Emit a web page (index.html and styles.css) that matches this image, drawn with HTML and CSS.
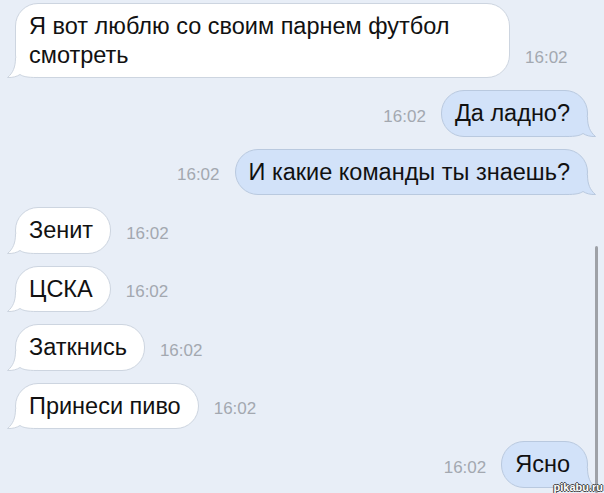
FILE: index.html
```html
<!DOCTYPE html>
<html lang="ru">
<head>
    <meta charset="UTF-8">
    <meta name="viewport" content="width=device-width, initial-scale=1.0">
    <title>Сообщения</title>
    <link rel="stylesheet" href="styles.css">
</head>
<body>
    <div class="chat">
        <!-- Входящее -->
        <div class="row in">
            <div class="bubble"><span class="text">Я вот люблю со своим парнем футбол смотреть</span>
                <svg class="tail" viewBox="0 0 30 20" width="30" height="20"><path class="tail-fill" d="M8.5 0 C8.5 9 6 15 0.5 19.5 C5.5 19.8 10 18.5 13 16.5 C16 18.5 20 19.5 30 19.5 L30 0 Z"/><path class="tail-line" d="M8.5 0 C8.5 9 6 15 0.5 19.5 C5.5 19.8 10 18.5 13 16.5 C16 18.5 20 19.5 30 19.5"/></svg>
            </div>
            <span class="time">16:02</span>
        </div>

        <!-- Исходящие -->
        <div class="row out">
            <span class="time">16:02</span>
            <div class="bubble"><span class="text">Да ладно?</span>
                <svg class="tail" viewBox="0 0 30 20" width="30" height="20"><path class="tail-fill" d="M8.5 0 C8.5 9 6 15 0.5 19.5 C5.5 19.8 10 18.5 13 16.5 C16 18.5 20 19.5 30 19.5 L30 0 Z"/><path class="tail-line" d="M8.5 0 C8.5 9 6 15 0.5 19.5 C5.5 19.8 10 18.5 13 16.5 C16 18.5 20 19.5 30 19.5"/></svg>
            </div>
        </div>
        <div class="row out">
            <span class="time">16:02</span>
            <div class="bubble"><span class="text">И какие команды ты знаешь?</span>
                <svg class="tail" viewBox="0 0 30 20" width="30" height="20"><path class="tail-fill" d="M8.5 0 C8.5 9 6 15 0.5 19.5 C5.5 19.8 10 18.5 13 16.5 C16 18.5 20 19.5 30 19.5 L30 0 Z"/><path class="tail-line" d="M8.5 0 C8.5 9 6 15 0.5 19.5 C5.5 19.8 10 18.5 13 16.5 C16 18.5 20 19.5 30 19.5"/></svg>
            </div>
        </div>

        <div class="row in">
            <div class="bubble"><span class="text">Зенит</span>
                <svg class="tail" viewBox="0 0 30 20" width="30" height="20"><path class="tail-fill" d="M8.5 0 C8.5 9 6 15 0.5 19.5 C5.5 19.8 10 18.5 13 16.5 C16 18.5 20 19.5 30 19.5 L30 0 Z"/><path class="tail-line" d="M8.5 0 C8.5 9 6 15 0.5 19.5 C5.5 19.8 10 18.5 13 16.5 C16 18.5 20 19.5 30 19.5"/></svg>
            </div>
            <span class="time">16:02</span>
        </div>
        <div class="row in">
            <div class="bubble"><span class="text">ЦСКА</span>
                <svg class="tail" viewBox="0 0 30 20" width="30" height="20"><path class="tail-fill" d="M8.5 0 C8.5 9 6 15 0.5 19.5 C5.5 19.8 10 18.5 13 16.5 C16 18.5 20 19.5 30 19.5 L30 0 Z"/><path class="tail-line" d="M8.5 0 C8.5 9 6 15 0.5 19.5 C5.5 19.8 10 18.5 13 16.5 C16 18.5 20 19.5 30 19.5"/></svg>
            </div>
            <span class="time">16:02</span>
        </div>
        <div class="row in">
            <div class="bubble"><span class="text">Заткнись</span>
                <svg class="tail" viewBox="0 0 30 20" width="30" height="20"><path class="tail-fill" d="M8.5 0 C8.5 9 6 15 0.5 19.5 C5.5 19.8 10 18.5 13 16.5 C16 18.5 20 19.5 30 19.5 L30 0 Z"/><path class="tail-line" d="M8.5 0 C8.5 9 6 15 0.5 19.5 C5.5 19.8 10 18.5 13 16.5 C16 18.5 20 19.5 30 19.5"/></svg>
            </div>
            <span class="time">16:02</span>
        </div>
        <div class="row in">
            <div class="bubble"><span class="text">Принеси пиво</span>
                <svg class="tail" viewBox="0 0 30 20" width="30" height="20"><path class="tail-fill" d="M8.5 0 C8.5 9 6 15 0.5 19.5 C5.5 19.8 10 18.5 13 16.5 C16 18.5 20 19.5 30 19.5 L30 0 Z"/><path class="tail-line" d="M8.5 0 C8.5 9 6 15 0.5 19.5 C5.5 19.8 10 18.5 13 16.5 C16 18.5 20 19.5 30 19.5"/></svg>
            </div>
            <span class="time">16:02</span>
        </div>

        <div class="row out">
            <span class="time">16:02</span>
            <div class="bubble"><span class="text">Ясно</span>
                <svg class="tail" viewBox="0 0 30 20" width="30" height="20"><path class="tail-fill" d="M8.5 0 C8.5 9 6 15 0.5 19.5 C5.5 19.8 10 18.5 13 16.5 C16 18.5 20 19.5 30 19.5 L30 0 Z"/><path class="tail-line" d="M8.5 0 C8.5 9 6 15 0.5 19.5 C5.5 19.8 10 18.5 13 16.5 C16 18.5 20 19.5 30 19.5"/></svg>
            </div>
        </div>
    </div>

    <div class="scrollbar"></div>
    <div class="watermark">pikabu.ru</div>
</body>
</html>
```

FILE: styles.css
```css
html, body {
    margin: 0;
    padding: 0;
    height: 100%;
    overflow: hidden;
}

body {
    font-family: "Liberation Sans", Arial, sans-serif;
    background-color: #e8eef7;
    color: #111;
    position: relative;
}

.chat {
    display: flex;
    flex-direction: column;
    gap: 12px;
    padding: 3px 16px 0 15px;
}

.row {
    display: flex;
    align-items: flex-end;
    gap: 15px;
}

.row.out {
    justify-content: flex-end;
}

.bubble {
    position: relative;
    max-width: 463px;
    padding: 8px 17px 8px 13px;
    font-size: 23.5px;
    line-height: 28.5px;
    border-radius: 23px;
    border: 1px solid #cdd5e0;
    background-color: #fff;
}

.out .bubble {
    background-color: #d2e2f9;
    border-color: #b9c9df;
}

.text {
    position: relative;
    z-index: 1;
}

.time {
    font-size: 17px;
    line-height: 20px;
    color: #a3a8b0;
    padding-bottom: 10px;
}

/* Хвостик пузыря */
.tail {
    position: absolute;
    left: -9px;
    bottom: -1px;
    overflow: visible;
}

.out .tail {
    left: auto;
    right: -9px;
    transform: scaleX(-1);
}

.tail-fill {
    fill: #fff;
}

.out .tail-fill {
    fill: #d2e2f9;
}

.tail-line {
    fill: none;
    stroke: #cdd5e0;
    stroke-width: 1;
}

.out .tail-line {
    stroke: #b9c9df;
}

.scrollbar {
    position: absolute;
    right: 6px;
    top: 246px;
    bottom: 0;
    width: 3px;
    border-radius: 2px;
    background-color: #9ea1a7;
}

.watermark {
    position: absolute;
    right: 1px;
    bottom: 0;
    font-size: 11px;
    font-weight: bold;
    color: #fff;
    text-shadow: 1px 0 0 #444, -1px 0 0 #444, 0 1px 0 #444, 0 -1px 0 #444;
}
```
